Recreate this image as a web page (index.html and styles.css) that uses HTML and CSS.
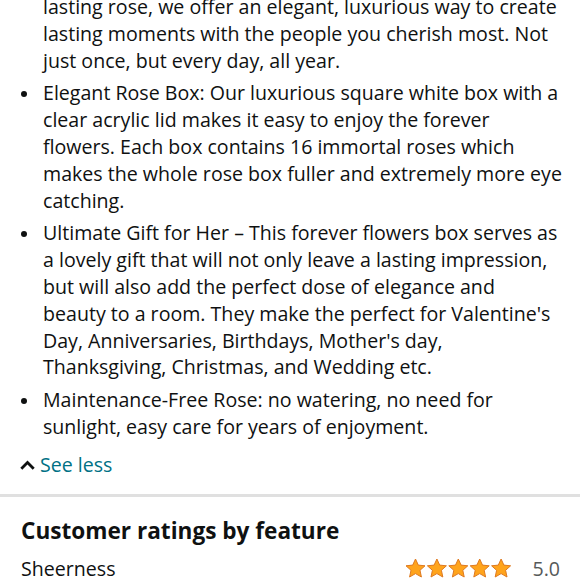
FILE: index.html
```
<!DOCTYPE html>
<html>
<head>
<meta charset="utf-8">
<link rel="stylesheet" href="styles.css">
</head>
<body>
<div class="page">
  <ul class="bullets">
    <li class="cont">lasting rose, we offer an elegant, luxurious way to create<br>lasting moments with the people you cherish most. Not<br>just once, but every day, all year.</li>
    <li>Elegant Rose Box: Our luxurious square white box with a<br>clear acrylic lid makes it easy to enjoy the forever<br>flowers. Each box contains 16 immortal roses which<br>makes the whole rose box fuller and extremely more eye<br>catching.</li>
    <li>Ultimate Gift for Her – This forever flowers box serves as<br>a lovely gift that will not only leave a lasting impression,<br>but will also add the perfect dose of elegance and<br>beauty to a room. They make the perfect for Valentine's<br>Day, Anniversaries, Birthdays, Mother's day,<br>Thanksgiving, Christmas, and Wedding etc.</li>
    <li>Maintenance-Free Rose: no watering, no need for<br>sunlight, easy care for years of enjoyment.</li>
  </ul>
  <a class="see-less" href="#">
    <svg class="chev" width="15" height="10" viewBox="0 0 15 10"><path d="M1.3 8.8 L7.5 2.6 L13.7 8.8" fill="none" stroke="#0f1111" stroke-width="2.8"/></svg>
    <span>See less</span>
  </a>
  <div class="divider"></div>
  <section class="ratings">
    <h2>Customer ratings by feature</h2>
    <div class="row">
      <span class="feat">Sheerness</span>
      <span class="stars">
        <svg width="108" height="21" viewBox="0 0 108 21">
          <defs>
            <path id="st" d="M10.5 1 L13.3 7.1 L20 7.8 L15 12.3 L16.4 19 L10.5 15.6 L4.6 19 L6 12.3 L1 7.8 L7.7 7.1 Z" fill="#ffa41c" stroke="#de7921" stroke-width="1" stroke-linejoin="round"/>
          </defs>
          <use href="#st" x="0"/>
          <use href="#st" x="21.4"/>
          <use href="#st" x="42.8"/>
          <use href="#st" x="64.2"/>
          <use href="#st" x="85.6"/>
        </svg>
      </span>
      <span class="score">5.0</span>
    </div>
  </section>
</div>
</body>
</html>
```
FILE: styles.css
```
html, body {
  margin: 0;
  padding: 0;
  background: #fff;
}
body {
  font-family: "Open Sans", "Noto Sans", sans-serif;
  color: #0f1111;
  overflow: hidden;
}
.page {
  width: 580px;
}
.bullets {
  margin: -6px 0 0 0;
  padding: 0 0 0 43px;
  list-style: none;
  font-size: 19.6px;
  line-height: 26.8px;
  white-space: nowrap;
}
.bullets li {
  position: relative;
  margin-bottom: 6px;
}
.bullets li::before {
  content: "";
  position: absolute;
  left: -22px;
  top: 11px;
  width: 6px;
  height: 6px;
  border-radius: 50%;
  background: #0f1111;
}
.bullets li.cont::before {
  display: none;
}
.see-less {
  display: flex;
  align-items: center;
  gap: 5px;
  margin: 11px 0 0 20px;
  color: #007185;
  text-decoration: none;
  font-size: 19.6px;
  line-height: 26px;
}
.divider {
  height: 3px;
  background: #e0e0e0;
  margin-top: 16px;
}
.ratings {
  padding: 0 20px 0 21px;
}
.ratings h2 {
  margin: 19px 0 0 0;
  font-size: 22.6px;
  line-height: 30px;
  font-weight: 700;
}
.row {
  display: flex;
  align-items: center;
  margin-top: 10px;
  font-size: 19.6px;
  line-height: 26px;
}
.feat {
  flex: 1;
}
.stars {
  display: flex;
  margin-right: 19px;
}
.score {
  color: #565959;
}
```
